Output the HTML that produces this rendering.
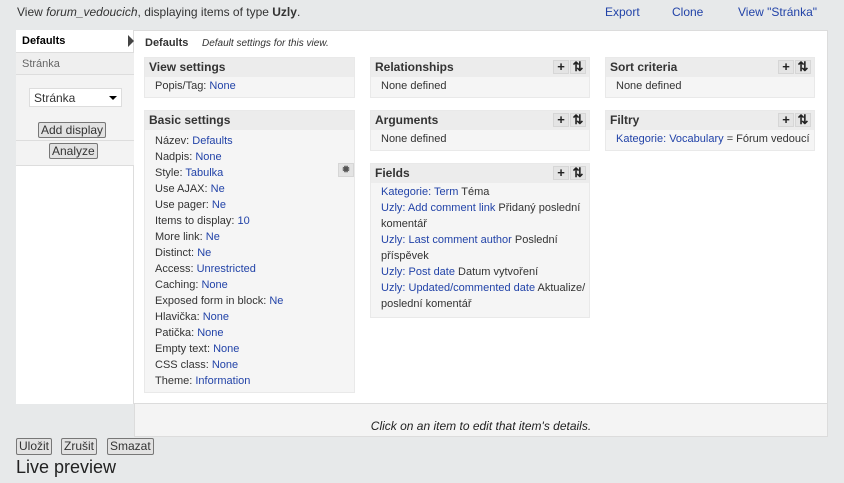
<!DOCTYPE html>
<html><head><meta charset="utf-8"><style>
*{margin:0;padding:0;box-sizing:border-box}
body{width:844px;height:483px;background:#e7e9ea;font-family:"Liberation Sans",Arial,sans-serif;color:#333;position:relative;overflow:hidden}
.a{position:absolute}
a,.l{color:#2243a8;text-decoration:none}
.top{font-size:12px;top:5px}
.panel{position:absolute;background:#f5f5f5;border:1px solid #e9e9e9}
.ph{background:#ececec;height:19px;font-weight:bold;font-size:12px;padding:2px 0 0 4px;position:relative}
.pb{font-size:11px;line-height:16px;padding:1px 0 3px 10px}
.btns{position:absolute;right:3px;top:2px;display:flex}
.btns span{width:16px;height:14px;background:#e4e4e4;border:1px solid #d6d6d6;font-size:13px;line-height:12px;text-align:center;font-weight:bold;margin-left:1px;color:#222}
.btn{position:absolute;font-size:11px;border:1px solid #777;border-radius:2px;background:#e2e2e2;color:#333;padding:0 2px;height:16px;line-height:14px}
</style></head><body>
<div class="a top" style="left:17px">View <i>forum_vedoucich</i>, displaying items of type <b>Uzly</b>.</div>
<div class="a top" style="left:605px"><a>Export</a></div>
<div class="a top" style="left:672px"><a>Clone</a></div>
<div class="a top" style="left:738px"><a>View "Stránka"</a></div>

<div class="a" style="left:16px;top:30px;width:812px;height:374px;background:#fff;border:1px solid #dcdcdc"></div>
<div class="a" style="left:16px;top:30px;width:118px;height:374px;background:#fff;border-right:1px solid #ddd"></div>
<div class="a" style="left:22px;top:35px;font-size:11px;font-weight:bold;color:#000">Defaults</div>
<div class="a" style="left:128px;top:35px;width:0;height:0;border-top:6px solid transparent;border-bottom:6px solid transparent;border-left:6px solid #444"></div>
<div class="a" style="left:16px;top:52px;width:118px;height:23px;background:#efefef;border-top:1px solid #ddd;border-bottom:1px solid #ddd;font-size:11px;color:#666;padding:5px 0 0 6px">Stránka</div>
<div class="a" style="left:16px;top:75px;width:118px;height:91px;background:#f3f3f3;border-bottom:1px solid #ddd"></div>
<div class="a" style="left:16px;top:140px;width:118px;height:1px;background:#ddd"></div>
<div class="a" style="left:29px;top:88px;width:93px;height:19px;background:#fff;border:1px solid #ddd;font-size:12px;padding:2px 0 0 4px">Stránka<span style="position:absolute;right:4px;top:7px;border-left:4px solid transparent;border-right:4px solid transparent;border-top:4px solid #000"></span></div>
<div class="btn" style="left:38px;top:122px;font-size:12px">Add display</div>
<div class="btn" style="left:49px;top:143px;font-size:12px">Analyze</div>

<div class="a" style="left:145px;top:37px;font-size:11px;font-weight:bold">Defaults</div>
<div class="a" style="left:202px;top:38px;font-size:10px;font-style:italic">Default settings for this view.</div>

<div class="panel" style="left:144px;top:57px;width:211px;height:41px"><div class="ph">View settings</div><div class="pb">Popis/Tag: <a>None</a></div></div>
<div class="panel" style="left:144px;top:110px;width:211px;height:283px"><div class="ph">Basic settings</div><div class="pb" style="padding-top:3px">
Název: <a>Defaults</a><br>Nadpis: <a>None</a><br>Style: <a>Tabulka</a><br>Use AJAX: <a>Ne</a><br>Use pager: <a>Ne</a><br>Items to display: <a>10</a><br>More link: <a>Ne</a><br>Distinct: <a>Ne</a><br>Access: <a>Unrestricted</a><br>Caching: <a>None</a><br>Exposed form in block: <a>Ne</a><br>Hlavička: <a>None</a><br>Patička: <a>None</a><br>Empty text: <a>None</a><br>CSS class: <a>None</a><br>Theme: <a>Information</a></div>
<div style="position:absolute;left:193px;top:52px;width:16px;height:14px;background:#e4e4e4;border:1px solid #d6d6d6;font-size:11px;line-height:12px;text-align:center;color:#555">✹</div></div>

<div class="panel" style="left:370px;top:57px;width:220px;height:41px"><div class="ph">Relationships<div class="btns"><span>+</span><span>⇅</span></div></div><div class="pb">None defined</div></div>
<div class="panel" style="left:370px;top:110px;width:220px;height:41px"><div class="ph">Arguments<div class="btns"><span>+</span><span>⇅</span></div></div><div class="pb">None defined</div></div>
<div class="panel" style="left:370px;top:163px;width:220px;height:155px"><div class="ph">Fields<div class="btns"><span>+</span><span>⇅</span></div></div><div class="pb" style="padding-top:1px">
<a>Kategorie: Term</a> Téma<br><a>Uzly: Add comment link</a> Přidaný poslední<br>komentář<br><a>Uzly: Last comment author</a> Poslední<br>příspěvek<br><a>Uzly: Post date</a> Datum vytvoření<br><a>Uzly: Updated/commented date</a> Aktualize/<br>poslední komentář</div></div>

<div class="panel" style="left:605px;top:57px;width:210px;height:41px"><div class="ph">Sort criteria<div class="btns"><span>+</span><span>⇅</span></div></div><div class="pb">None defined</div></div>
<div class="panel" style="left:605px;top:110px;width:210px;height:41px"><div class="ph">Filtry<div class="btns"><span>+</span><span>⇅</span></div></div><div class="pb"><a>Kategorie: Vocabulary</a> = Fórum vedoucí</div></div>

<div class="a" style="left:134px;top:403px;width:694px;height:34px;background:#f4f4f4;border:1px solid #dcdcdc;font-size:12px;font-style:italic;text-align:center;padding-top:15px;color:#222">Click on an item to edit that item's details.</div>

<div class="btn" style="left:16px;top:438px;font-size:12px;height:17px">Uložit</div>
<div class="btn" style="left:61px;top:438px;font-size:12px;height:17px">Zrušit</div>
<div class="btn" style="left:107px;top:438px;font-size:12px;height:17px">Smazat</div>
<div class="a" style="left:16px;top:457px;font-size:18px;color:#222">Live preview</div>
</body></html>
